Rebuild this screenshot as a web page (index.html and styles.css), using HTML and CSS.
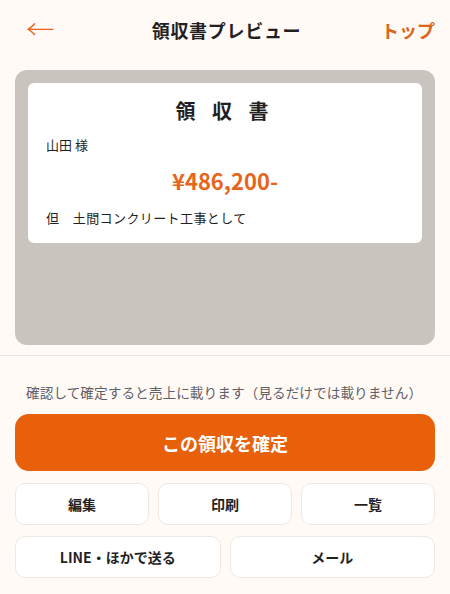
FILE: index.html
```html
<!DOCTYPE html>
<html lang="ja">
<head>
<meta charset="utf-8">
<link rel="stylesheet" href="styles.css">
</head>
<body>
<div class="page">
  <header class="header">
    <span class="back">←</span>
    <h1 class="title">領収書プレビュー</h1>
    <span class="top">トップ</span>
  </header>
  <section class="preview">
    <div class="receipt">
      <div class="r-title">領 収 書</div>
      <div class="r-name">山田 様</div>
      <div class="r-amount">¥486,200-</div>
      <div class="r-note">但　土間コンクリート工事として</div>
    </div>
  </section>
  <div class="divider"></div>
  <p class="hint">確認して確定すると売上に載ります（見るだけでは載りません）</p>
  <button class="confirm">この領収を確定</button>
  <div class="row three">
    <button class="btn">編集</button>
    <button class="btn">印刷</button>
    <button class="btn">一覧</button>
  </div>
  <div class="row two">
    <button class="btn">LINE・ほかで送る</button>
    <button class="btn">メール</button>
  </div>
</div>
</body>
</html>
```

FILE: styles.css
```css
* { box-sizing: border-box; }
html, body { margin: 0; padding: 0; }
body {
  background: #fffaf6;
  font-family: "Noto Sans CJK JP", "Noto Sans", sans-serif;
  color: #1f1f24;
  width: 450px;
  height: 594px;
  overflow: hidden;
}
.page { display: flex; flex-direction: column; }
.header {
  height: 60px;
  display: grid;
  grid-template-columns: 1fr auto 1fr;
  align-items: center;
  padding: 0 15px 0 26px;
}
.back { color: #e8641a; font-size: 26px; line-height: 1; font-weight: 300; margin-top: -4px; transform: scaleX(1.1); transform-origin: left center; }
.title { margin: 0; font-size: 18px; font-weight: 700; color: #1f1f24; letter-spacing: 0.7px; margin-left: -8px; }
.top { color: #d9661b; font-size: 18px; font-weight: 700; text-align: right; }
.preview {
  margin: 10px 15px 0;
  height: 275px;
  background: #c9c4be;
  border-radius: 12px;
  padding: 13px;
}
.receipt {
  background: #fff;
  border-radius: 6px;
  height: 160px;
  padding: 12px 18px 0;
}
.r-title { text-align: center; font-size: 20px; font-weight: 700; letter-spacing: 6px; line-height: 32px; }
.r-name { font-size: 13px; margin-top: 9px; line-height: 18px; }
.r-amount { text-align: center; color: #e8641a; font-size: 22px; font-weight: 700; line-height: 30px; margin-top: 11px; }
.r-note { font-size: 13px; margin-top: 14px; line-height: 18px; letter-spacing: 0.4px; }
.divider { height: 1px; background: #ece5de; margin-top: 10px; }
.hint { margin: 26px 0 0 26px; font-size: 13.7px; color: #5f5f66; line-height: 20px; }
.confirm {
  margin: 12px 15px 0;
  height: 57px;
  border: none;
  border-radius: 14px;
  background: #e8600a;
  color: #fff;
  font-family: inherit;
  font-size: 18px;
  font-weight: 700;
}
.row { display: grid; margin: 12px 15px 0; gap: 9px; }
.row.three { grid-template-columns: 1fr 1fr 1fr; }
.row.two { grid-template-columns: 1fr 1fr; margin-top: 11px; }
.btn {
  height: 42px;
  background: #fff;
  border: 1px solid #efe9e3;
  border-radius: 10px;
  font-family: inherit;
  font-size: 14px;
  font-weight: 700;
  color: #1f1f24;
}
```
